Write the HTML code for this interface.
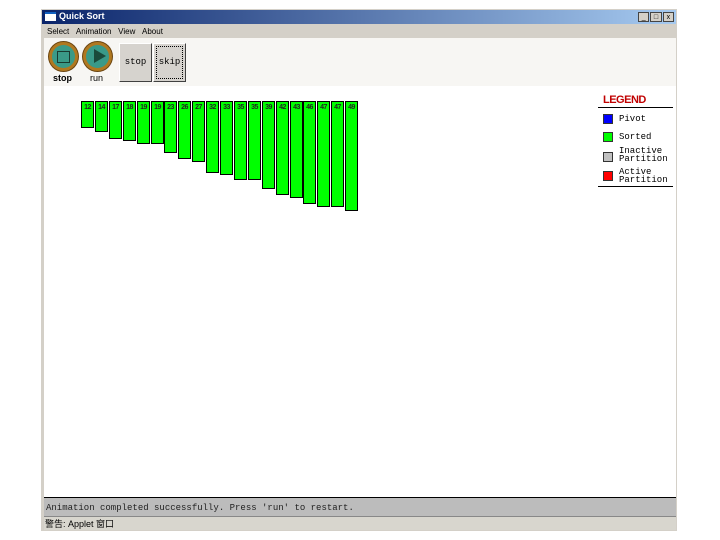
<!DOCTYPE html><html><head><style>
body{margin:0;width:720px;height:540px;background:#fff;position:relative;overflow:hidden;font-family:"Liberation Sans","Noto Sans CJK SC",sans-serif}
.a{position:absolute}
.bar{position:absolute;top:101px;width:11px;background:#00ff00;border:1px solid #000;font-size:7px;text-align:center;line-height:11px;font-weight:bold;color:#222;letter-spacing:-0.5px}
.circ{position:absolute;width:23px;height:23px;border-radius:50%;background:#3a9a88;border:3px solid #b07820;box-shadow:0 0 0 1px #6a4410}
.btn{position:absolute;top:43px;width:31px;height:37px;background:#d6d3ce;border:1px solid;border-color:#fff #404040 #404040 #fff;font-family:"Liberation Mono",monospace;font-size:9px;line-height:37px;text-align:center}
.lg{position:absolute;left:619px;font-family:"Liberation Mono",monospace;font-size:9px;line-height:8px;color:#000}
.sw{position:absolute;left:603px;width:8px;height:8px;border:1px solid #333}
</style></head><body>
<div class="a" style="left:41px;top:9px;width:636px;height:522px;background:#d4d0c8"></div>
<div class="a" style="left:42px;top:10px;width:634px;height:14px;background:linear-gradient(90deg,#0a246a,#a6caf0)"></div>
<div class="a" style="left:45px;top:12px;width:11px;height:9px;background:#fff;border-top:2px solid #1060c0;box-sizing:border-box"></div>
<div class="a" style="left:59px;top:11px;color:#fff;font-size:9px;font-weight:bold">Quick Sort</div>
<div class="a" style="left:638px;top:12px;width:36px;height:10px;display:flex;gap:1px"><div style="flex:1;background:#d4d0c8;border:1px solid #444;font-size:7px;text-align:center;line-height:9px">_</div><div style="flex:1;background:#d4d0c8;border:1px solid #444;font-size:7px;text-align:center;line-height:9px">□</div><div style="flex:1;background:#d4d0c8;border:1px solid #444;font-size:7px;text-align:center;line-height:9px">x</div></div>
<div class="a" style="left:47px;top:27px;font-size:8px;word-spacing:0">Select&nbsp;&nbsp;&nbsp;Animation&nbsp;&nbsp;&nbsp;View&nbsp;&nbsp;&nbsp;About</div>
<div class="a" style="left:44px;top:38px;width:632px;height:460px;background:#fff"></div>
<div class="a" style="left:44px;top:38px;width:632px;height:48px;background:#f7f6f3"></div>
<div class="circ" style="left:49px;top:42px"><div class="a" style="left:5px;top:6px;width:11px;height:10px;border:1px solid #1a3a30"></div></div>
<div class="circ" style="left:83px;top:42px"><div class="a" style="left:8px;top:4px;width:0;height:0;border-left:12px solid #1a4a3a;border-top:7px solid transparent;border-bottom:7px solid transparent"></div></div>
<div class="a" style="left:53px;top:73px;font-size:9px;font-weight:bold">stop</div>
<div class="a" style="left:90px;top:73px;font-size:9px">run</div>
<div class="btn" style="left:119px">stop</div>
<div class="btn" style="left:153px;outline:1px dotted #000;outline-offset:-4px">skip</div>
<div id="bars"></div>
<div class="a" style="left:603px;top:94px;color:#c00000;font-size:11px;font-weight:bold;letter-spacing:-0.5px">LEGEND</div>
<div class="a" style="left:598px;top:107px;width:75px;height:1px;background:#000"></div>
<div class="sw" style="top:114px;background:#0000ff"></div><div class="lg" style="top:115px">Pivot</div>
<div class="sw" style="top:132px;background:#00ff00"></div><div class="lg" style="top:133px">Sorted</div>
<div class="sw" style="top:152px;background:#c0c0c0"></div><div class="lg" style="top:147px">Inactive<br>Partition</div>
<div class="sw" style="top:171px;background:#ff0000"></div><div class="lg" style="top:168px">Active<br>Partition</div>
<div class="a" style="left:598px;top:186px;width:75px;height:1px;background:#000"></div>
<div class="a" style="left:44px;top:497px;width:632px;height:1px;background:#000"></div>
<div class="a" style="left:44px;top:498px;width:632px;height:18px;background:#bcbcbc;border-bottom:1px solid #888"></div>
<div class="a" style="left:46px;top:503px;font-family:'Liberation Mono',monospace;font-size:9px;color:#222">Animation completed successfully. Press 'run' to restart.</div>
<div class="a" style="left:44px;top:517px;width:632px;height:13px;background:#d8d6ce"></div>
<div class="a" style="left:45px;top:517px;font-size:9px;color:#000">警告: Applet 窗口</div>
<script>
var v=[12,14,17,18,19,19,23,26,27,32,33,35,35,39,42,43,46,47,47,49],b=[128,132,139,141,144,144,153,159,162,173,175,180,180,189,195,198,204,207,207,211],h='';
for(var i=0;i<20;i++){h+='<div class="bar" style="left:'+Math.round(81+i*13.9)+'px;height:'+(b[i]-101-2)+'px">'+v[i]+'</div>'}
document.getElementById('bars').innerHTML=h;
</script>
</body></html>
